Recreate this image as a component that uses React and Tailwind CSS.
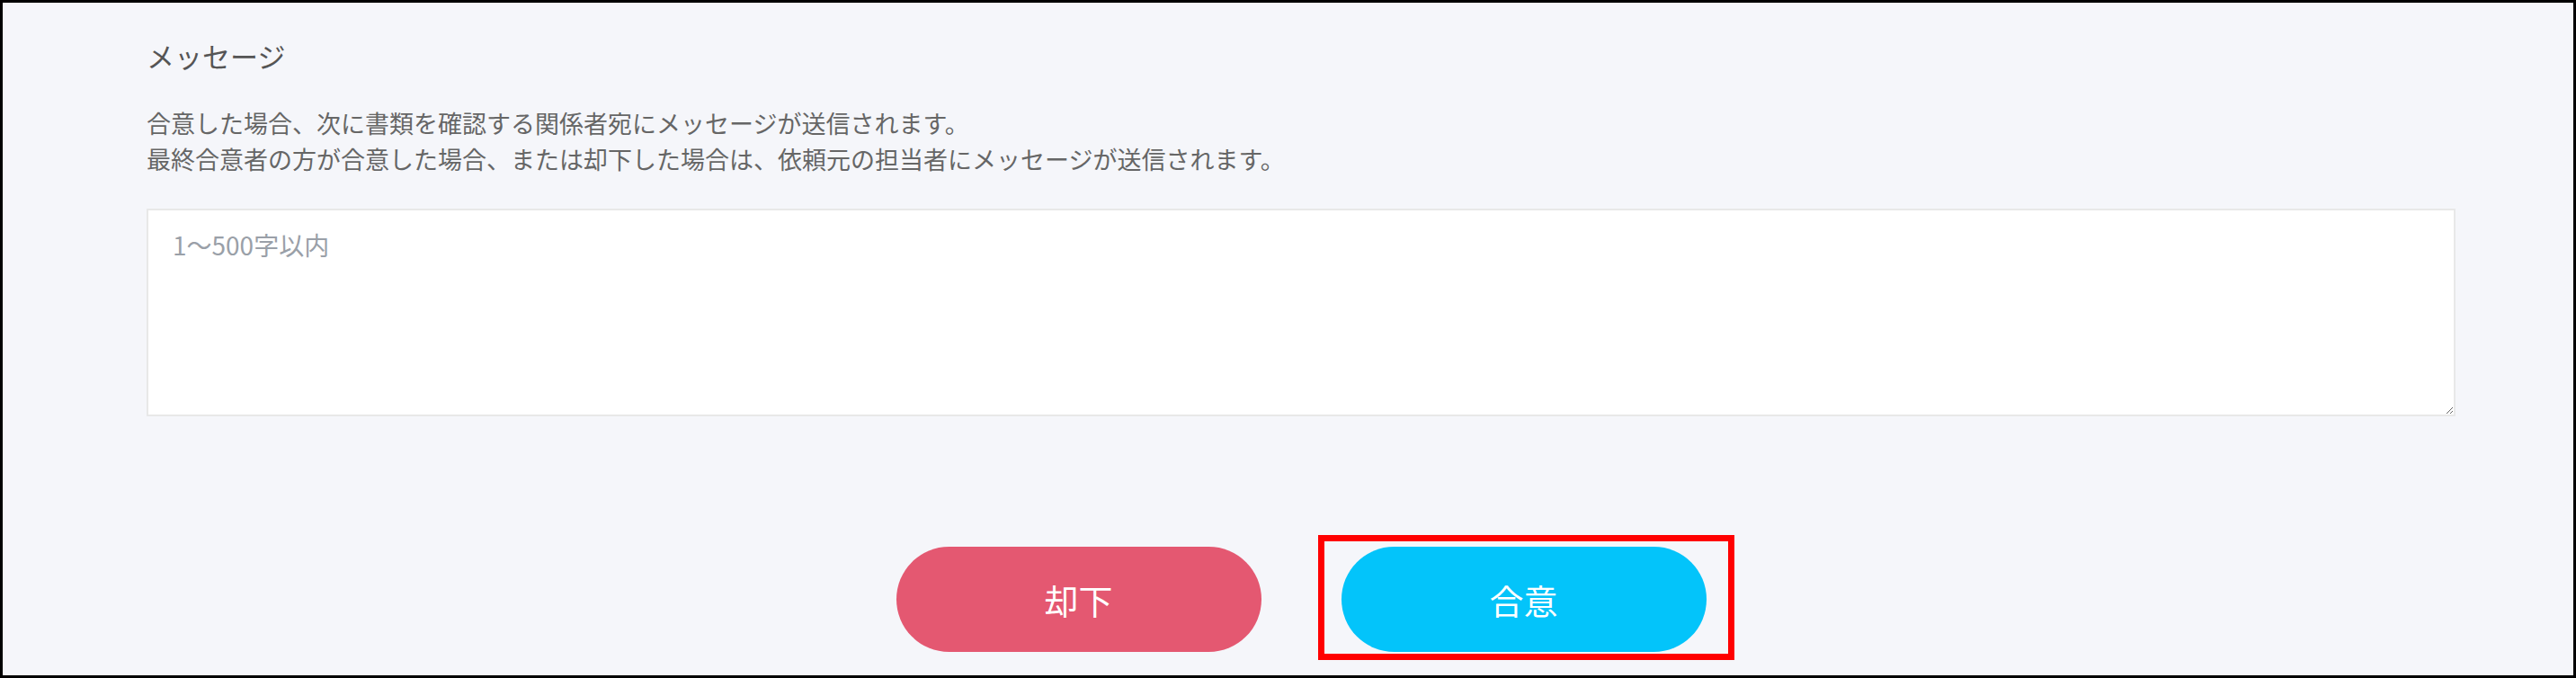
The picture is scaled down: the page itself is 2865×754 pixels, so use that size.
const App = () => {
  return (
    <div
      className="w-[2865px] h-[754px] border-[3px] border-black bg-[#f5f6fa] overflow-hidden"
      style={{ fontFamily: '"Noto Sans CJK JP", "Noto Sans", sans-serif' }}
    >
      <div className="pl-[160px] pr-[131px] pt-[39px]">
        {/* Message section */}
        <h3 className="text-[31px] leading-[40px] text-[#555] font-normal">メッセージ</h3>
        <div className="mt-[35px] text-[27px] leading-[40px] text-[#666]">
          <p>合意した場合、次に書類を確認する関係者宛にメッセージが送信されます。</p>
          <p>最終合意者の方が合意した場合、または却下した場合は、依頼元の担当者にメッセージが送信されます。</p>
        </div>
        <textarea
          className="mt-[35px] block w-full h-[231px] bg-white border-2 border-[#e8e8e8] px-[27px] pt-[18px] text-[28px] leading-[40px] text-[#333] placeholder:text-[#9aa0a8] outline-none"
          placeholder="1～500字以内"
        />

        {/* Actions */}
        <div className="mt-[145px] flex justify-center gap-[89px]">
          <button className="w-[406px] h-[117px] rounded-full bg-[#e45871] text-white text-[38px]">
            却下
          </button>
          <div className="relative">
            <button className="w-[406px] h-[117px] rounded-full bg-[#03c4fa] text-white text-[38px]">
              合意
            </button>
            <div className="absolute left-[-26px] right-[-31px] top-[-13px] bottom-[-9px] border-[7px] border-[#ff0000] pointer-events-none" />
          </div>
        </div>
      </div>
    </div>
  );
};

export default App;
